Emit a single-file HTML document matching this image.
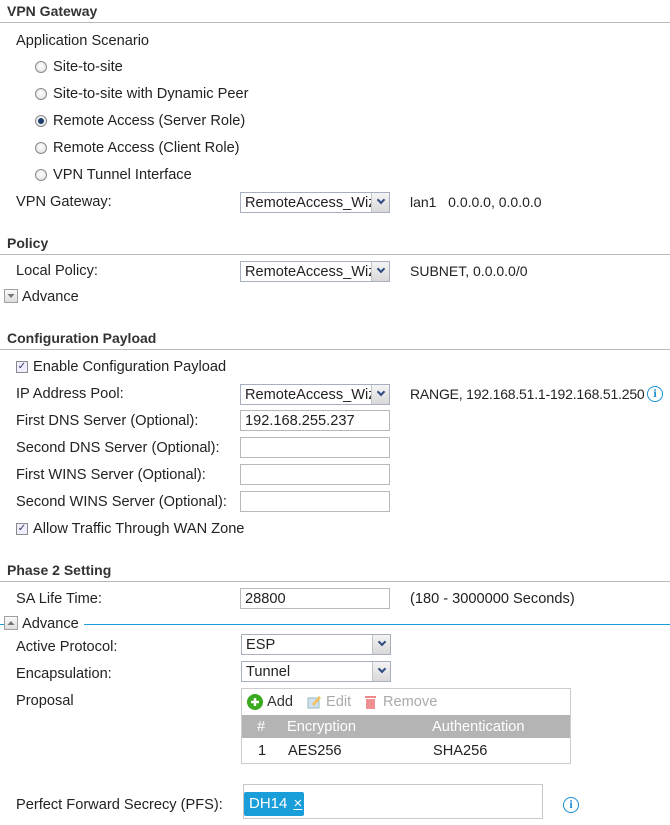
<!DOCTYPE html>
<html><head><meta charset="utf-8"><style>
*{margin:0;padding:0;box-sizing:border-box}
body{width:670px;height:825px;background:#fff;font-family:"Liberation Sans",Arial,sans-serif;font-size:14.6px;color:#222;position:relative;overflow:hidden}
.t{position:absolute;line-height:19px;white-space:nowrap}
.h{position:absolute;font-weight:bold;font-size:14px;color:#333;line-height:17px;left:7px}
.ln{position:absolute;left:0;width:670px;height:1px;background:#b8b8b8}
.r{position:absolute;left:35px;width:12px;height:12px;border-radius:50%;border:1px solid #8a8a8a;background:radial-gradient(circle at 50% 40%,#fff,#ddd)}
.r.on::after{content:"";position:absolute;left:2px;top:2px;width:6px;height:6px;border-radius:50%;background:#1e3f6e}
.cb{position:absolute;left:16px;width:12px;height:12px;border:1px solid #8a8a8a;background:#eef;font-size:10px;line-height:10px;text-align:center;color:#335}
.sel{position:absolute;left:240px;width:150px;height:21px;border:1px solid #a8afc0;background:#fff;padding-left:4px;line-height:20px;overflow:hidden;white-space:nowrap}
.sel::after{content:"";position:absolute;right:0;top:0;width:17px;height:19px;background:linear-gradient(#f4f4f4,#d8d8d8);border-left:1px solid #c0c4cc}
.sel i{position:absolute;right:5px;width:6px;height:6px;border-right:2px solid #2c4a80;border-bottom:2px solid #2c4a80;transform:rotate(45deg);z-index:2;top:4px}
.inp{position:absolute;left:240px;width:150px;height:21px;border:1px solid #b8b8b8;padding-left:4px;line-height:20px}
.tri{position:absolute;left:4px;width:14px;height:14px;border:1px solid #a0a0a0;background:linear-gradient(#fafafa,#ddd)}
.info{position:absolute;width:16px;height:16px;border:1.5px solid #1a8fd6;border-radius:50%;color:#1a8fd6;font:bold 12px "Liberation Serif",serif;text-align:center;line-height:13px}
</style></head><body>
<div class="h" style="top:3px">VPN Gateway</div><div class="ln" style="top:22px"></div>
<div class="t" style="left:16px;top:32px">Application Scenario</div>
<div class="r" style="top:61px"></div><div class="t" style="left:53px;top:58px">Site-to-site</div>
<div class="r" style="top:88px"></div><div class="t" style="left:53px;top:85px">Site-to-site with Dynamic Peer</div>
<div class="r on" style="top:115px"></div><div class="t" style="left:53px;top:112px">Remote Access (Server Role)</div>
<div class="r" style="top:142px"></div><div class="t" style="left:53px;top:139px">Remote Access (Client Role)</div>
<div class="r" style="top:169px"></div><div class="t" style="left:53px;top:166px">VPN Tunnel Interface</div>
<div class="t" style="left:16px;top:193px">VPN Gateway:</div>
<div class="sel" style="top:192px">RemoteAccess_Wiz<i></i></div>
<div class="t" style="left:410px;top:193px;font-size:14px">lan1&nbsp;&nbsp; 0.0.0.0, 0.0.0.0</div>

<div class="h" style="top:235px">Policy</div><div class="ln" style="top:254px"></div>
<div class="t" style="left:16px;top:262px">Local Policy:</div>
<div class="sel" style="top:261px">RemoteAccess_Wiz<i></i></div>
<div class="t" style="left:410px;top:262px;font-size:14px">SUBNET, 0.0.0.0/0</div>
<div class="tri" style="top:289px"><svg width="12" height="12" style="position:absolute;left:0;top:0"><path d="M2.5 4h7l-3.5 4z" fill="#777"/></svg></div>
<div class="t" style="left:22px;top:288px">Advance</div>

<div class="h" style="top:330px">Configuration Payload</div><div class="ln" style="top:349px"></div>
<div class="cb" style="top:361px">✓</div><div class="t" style="left:33px;top:358px">Enable Configuration Payload</div>
<div class="t" style="left:16px;top:385px">IP Address Pool:</div>
<div class="sel" style="top:384px">RemoteAccess_Wiz<i></i></div>
<div class="t" style="left:410px;top:385px;font-size:14px;letter-spacing:-0.2px">RANGE, 192.168.51.1-192.168.51.250</div>
<div class="info" style="left:647px;top:386px">i</div>
<div class="t" style="left:16px;top:412px">First DNS Server (Optional):</div>
<div class="inp" style="top:410px">192.168.255.237</div>
<div class="t" style="left:16px;top:439px">Second DNS Server (Optional):</div>
<div class="inp" style="top:437px"></div>
<div class="t" style="left:16px;top:466px">First WINS Server (Optional):</div>
<div class="inp" style="top:464px"></div>
<div class="t" style="left:16px;top:493px">Second WINS Server (Optional):</div>
<div class="inp" style="top:491px"></div>
<div class="cb" style="top:523px">✓</div><div class="t" style="left:33px;top:520px">Allow Traffic Through WAN Zone</div>

<div class="h" style="top:562px">Phase 2 Setting</div><div class="ln" style="top:581px"></div>
<div class="t" style="left:16px;top:590px">SA Life Time:</div>
<div class="inp" style="top:588px">28800</div>
<div class="t" style="left:410px;top:590px">(180 - 3000000 Seconds)</div>
<div style="position:absolute;left:0;top:624px;width:670px;height:1px;background:#1a9ed9"></div>
<div style="position:absolute;left:4px;top:616px;width:80px;height:16px;background:#fff"></div>
<div class="tri" style="top:616px"><svg width="12" height="12" style="position:absolute;left:0;top:0"><path d="M2.5 8h7l-3.5-4z" fill="#777"/></svg></div>
<div class="t" style="left:22px;top:615px">Advance</div>

<div class="t" style="left:16px;top:638px">Active Protocol:</div>
<div class="sel" style="left:241px;top:634px">ESP<i></i></div>
<div class="t" style="left:16px;top:665px">Encapsulation:</div>
<div class="sel" style="left:241px;top:661px">Tunnel<i></i></div>
<div class="t" style="left:16px;top:692px">Proposal</div>
<div style="position:absolute;left:241px;top:688px;width:330px;height:76px;border:1px solid #ccc"></div>
<svg style="position:absolute;left:247px;top:694px" width="16" height="16"><circle cx="8" cy="8" r="8" fill="#3aaa1e"/><path d="M8 4v8M4 8h8" stroke="#fff" stroke-width="2.4"/></svg>
<div class="t" style="left:267px;top:693px;color:#333">Add</div>
<svg style="position:absolute;left:307px;top:694px" width="14" height="16"><rect x="1" y="4" width="11" height="10" fill="#cfe0f0" stroke="#9bb" /><path d="M5 10l7-8 2 2-7 8z" fill="#f0c060"/></svg>
<div class="t" style="left:326px;top:693px;color:#aaa">Edit</div>
<svg style="position:absolute;left:364px;top:694px" width="13" height="16"><rect x="1" y="2" width="11" height="2" fill="#e88"/><rect x="2" y="5" width="9" height="10" fill="#f09090"/></svg>
<div class="t" style="left:383px;top:693px;color:#aaa">Remove</div>
<div style="position:absolute;left:242px;top:715px;width:328px;height:23px;background:#b4b4b4"></div>
<div class="t" style="left:257px;top:718px;color:#fff">#</div>
<div class="t" style="left:287px;top:718px;color:#fff">Encryption</div>
<div class="t" style="left:432px;top:718px;color:#fff">Authentication</div>
<div class="t" style="left:258px;top:742px">1</div>
<div class="t" style="left:288px;top:742px">AES256</div>
<div class="t" style="left:433px;top:742px">SHA256</div>

<div class="t" style="left:16px;top:796px">Perfect Forward Secrecy (PFS):</div>
<div style="position:absolute;left:243px;top:784px;width:300px;height:35px;border:1px solid #c8c8c8"></div>
<div style="position:absolute;left:244px;top:792px;width:60px;height:24px;background:#1a9ed9;border-radius:2px;color:#fff;line-height:23px;padding-left:5px;font-size:15px">DH14 <span style="text-decoration:underline;margin-left:2px">×</span></div>
<div class="info" style="left:563px;top:797px">i</div>
</body></html>
